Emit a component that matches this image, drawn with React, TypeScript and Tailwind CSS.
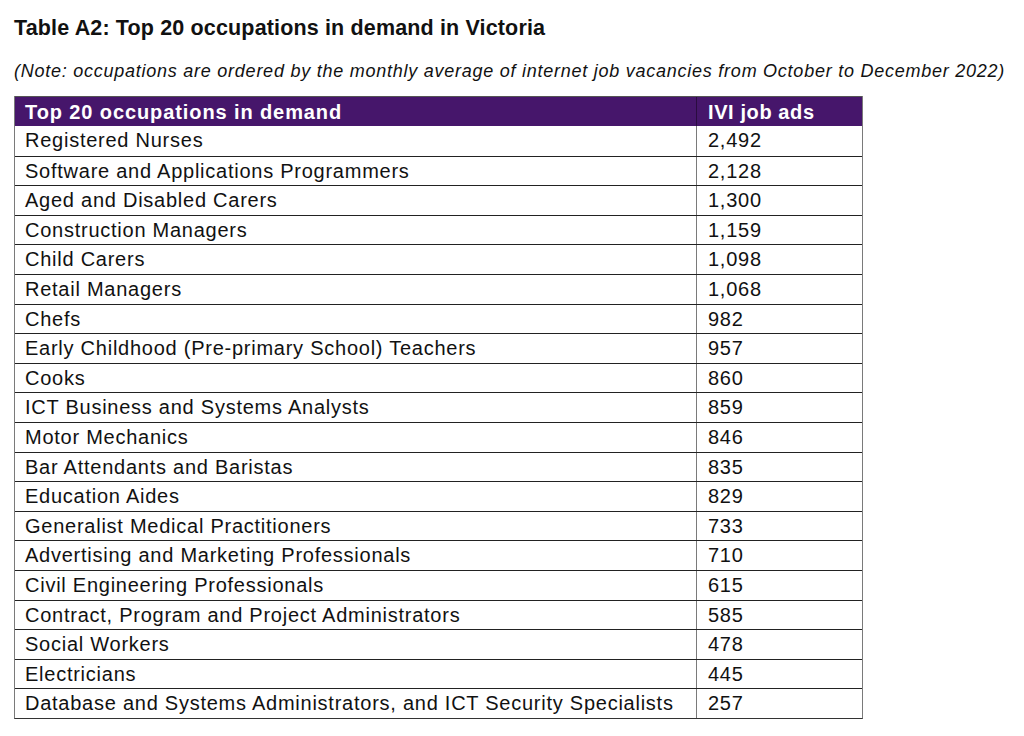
const rows: [string, string][] = [
  ['Registered Nurses', '2,492'],
  ['Software and Applications Programmers', '2,128'],
  ['Aged and Disabled Carers', '1,300'],
  ['Construction Managers', '1,159'],
  ['Child Carers', '1,098'],
  ['Retail Managers', '1,068'],
  ['Chefs', '982'],
  ['Early Childhood (Pre-primary School) Teachers', '957'],
  ['Cooks', '860'],
  ['ICT Business and Systems Analysts', '859'],
  ['Motor Mechanics', '846'],
  ['Bar Attendants and Baristas', '835'],
  ['Education Aides', '829'],
  ['Generalist Medical Practitioners', '733'],
  ['Advertising and Marketing Professionals', '710'],
  ['Civil Engineering Professionals', '615'],
  ['Contract, Program and Project Administrators', '585'],
  ['Social Workers', '478'],
  ['Electricians', '445'],
  ['Database and Systems Administrators, and ICT Security Specialists', '257'],
];

export default function App() {
  return (
    <div className="w-[1024px] h-[736px] bg-white overflow-hidden font-['Liberation_Sans',Arial,sans-serif] text-[#111]">
      <div className="pl-[14px] pt-[16px]">
        <h1 className="text-[21.5px] font-bold leading-[24px] tracking-[0.15px]">
          Table A2: Top 20 occupations in demand in Victoria
        </h1>
        <p className="mt-[20px] text-[18px] italic leading-[22px] tracking-[0.75px] whitespace-nowrap">
          (Note: occupations are ordered by the monthly average of internet job vacancies from October to December 2022)
        </p>

        {/* Table */}
        <div className="mt-[14px] w-[849px] border-l border-r border-[#7a7a7a] border-b-[1.5px] border-b-[#333]">
          <div className="flex h-[30px] bg-[#46166b] text-white font-bold text-[20px] leading-[30px] border-t border-t-[#555]">
            <div className="w-[682px] pl-[10px] border-r border-[#2a0c40] tracking-[0.9px]">Top 20 occupations in demand</div>
            <div className="flex-1 pl-[11px] tracking-[0.6px]">IVI job ads</div>
          </div>
          {rows.map(([name, ads], i) => (
            <div
              key={name}
              className={`flex h-[29.6px] text-[20px] leading-[29px] tracking-[0.75px] ${i > 0 ? 'border-t border-[#222]' : ''}`}
            >
              <div className="w-[682px] pl-[10px] border-r border-[#7a7a7a] whitespace-nowrap">{name}</div>
              <div className="flex-1 pl-[11px]">{ads}</div>
            </div>
          ))}
        </div>
      </div>
    </div>
  );
}
